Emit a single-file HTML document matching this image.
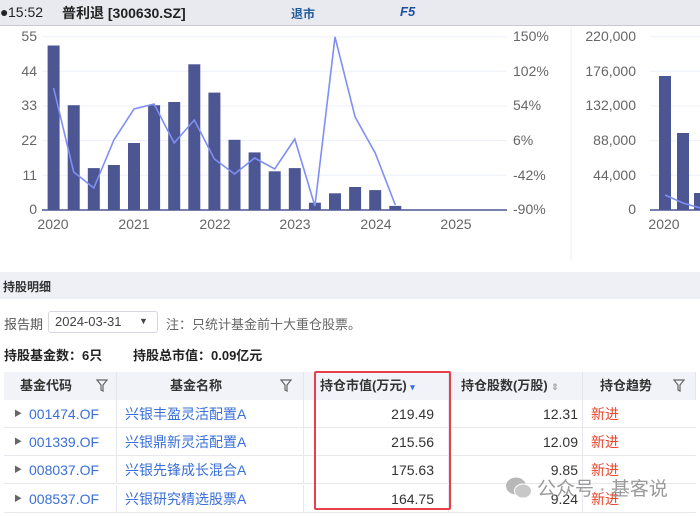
<!DOCTYPE html>
<html><head><meta charset="utf-8"><style>
*{margin:0;padding:0;box-sizing:border-box}
body{width:700px;height:516px;overflow:hidden;background:#fff;font-family:"Liberation Sans","Noto Sans CJK SC",sans-serif;position:relative;color:#333}
.a{position:absolute;white-space:nowrap}
.top{left:0;top:0;width:700px;height:26px;background:#e9eaf0;border-bottom:1px solid #c8c9d0}
.sec{left:0;top:272px;width:700px;height:27px;background:#eef0f6}
.th{position:absolute;top:372px;height:28px;background:#f2f3f8;border-right:1px solid #e3e5ec;font-weight:bold;font-size:13px;color:#333;line-height:28px}
.row{position:absolute;left:4px;width:692px;height:28px;border-bottom:1px solid #e6e8ee;font-size:14px;line-height:28px}
.c{position:absolute;top:0;height:28px;border-right:1px solid #e6e8ee}
.blue{color:#3a6fd8}
.red{color:#e8452c}
.flt{position:absolute;top:7px;width:12px;height:13px}
</style></head><body>
<div class="a top"></div>
<div class="a" style="left:0;top:4px;font-size:14px;color:#222">&#9679;</div>
<div class="a" style="left:8px;top:4px;font-size:14px;color:#222">15:52</div>
<div class="a" style="left:62px;top:3px;font-size:14px;font-weight:bold;color:#222">普利退 [300630.SZ]</div>
<div class="a" style="left:291px;top:5px;font-size:12px;font-weight:bold;color:#1f5a9a">退市</div>
<div class="a" style="left:400px;top:4px;font-size:13px;font-weight:bold;font-style:italic;color:#1f4ea0">F5</div>

<svg class="a" style="left:0;top:27px" width="700" height="240" viewBox="0 27 700 240">
<g stroke="#eef0fa" stroke-width="1">
<line x1="42" x2="507" y1="36.7" y2="36.7"/><line x1="42" x2="507" y1="71.3" y2="71.3"/><line x1="42" x2="507" y1="106" y2="106"/><line x1="42" x2="507" y1="140.6" y2="140.6"/><line x1="42" x2="507" y1="175.3" y2="175.3"/>
<line x1="650" x2="700" y1="36.7" y2="36.7"/><line x1="650" x2="700" y1="71.3" y2="71.3"/><line x1="650" x2="700" y1="106" y2="106"/><line x1="650" x2="700" y1="140.6" y2="140.6"/><line x1="650" x2="700" y1="175.3" y2="175.3"/>
</g>
<line x1="571" x2="571" y1="27" y2="260" stroke="#eceef3"/>
<g fill="#4c5693">
<rect x="47.6" y="45.5" width="12" height="164.5"/><rect x="67.7" y="105.2" width="12" height="104.8"/><rect x="87.8" y="168.1" width="12" height="41.9"/><rect x="107.9" y="165" width="12" height="45"/><rect x="128" y="143" width="12" height="67"/><rect x="148.1" y="105.2" width="12" height="104.8"/><rect x="168.2" y="102" width="12" height="108"/><rect x="188.3" y="64.3" width="12" height="145.7"/><rect x="208.4" y="92.6" width="12" height="117.4"/><rect x="228.5" y="139.8" width="12" height="70.2"/><rect x="248.6" y="152.4" width="12" height="57.6"/><rect x="268.7" y="171.3" width="12" height="38.7"/><rect x="288.8" y="168.1" width="12" height="41.9"/><rect x="308.9" y="202.7" width="12" height="7.3"/><rect x="329" y="193.3" width="12" height="16.7"/><rect x="349.1" y="187" width="12" height="23"/><rect x="369.2" y="190.1" width="12" height="19.9"/><rect x="389.3" y="205.9" width="12" height="4.1"/>
<rect x="659" y="76" width="12" height="134"/><rect x="677" y="133" width="12" height="77"/><rect x="694" y="193" width="12" height="17"/>
</g>
<polyline fill="none" stroke="#7f8ff5" stroke-width="1.6" points="53.6,88 73.7,172 93.8,188 113.9,140 134,109 154.1,104 174.2,143 194.3,120 214.4,159 234.5,174 254.6,158 274.7,169 294.8,139 314.9,206 335,37 355.1,117 375.2,153 395.3,205"/>
<polyline fill="none" stroke="#7f8ff5" stroke-width="1.6" points="665,195 683,203 700,208"/>
<line x1="42" x2="507" y1="210" y2="210" stroke="#4c5693" stroke-width="1.5"/>
<line x1="650" x2="700" y1="210" y2="210" stroke="#4c5693" stroke-width="1.5"/>
<g font-size="14" fill="#666" font-family="Liberation Sans,sans-serif">
<g text-anchor="end"><text x="37" y="41">55</text><text x="37" y="76">44</text><text x="37" y="110">33</text><text x="37" y="145">22</text><text x="37" y="180">11</text><text x="37" y="214">0</text>
<text x="636" y="41">220,000</text><text x="636" y="76">176,000</text><text x="636" y="110">132,000</text><text x="636" y="145">88,000</text><text x="636" y="180">44,000</text><text x="636" y="214">0</text></g>
<text x="513" y="41">150%</text><text x="513" y="76">102%</text><text x="513" y="110">54%</text><text x="513" y="145">6%</text><text x="513" y="180">-42%</text><text x="513" y="214">-90%</text>
<g text-anchor="middle"><text x="53" y="229">2020</text><text x="134" y="229">2021</text><text x="215" y="229">2022</text><text x="295" y="229">2023</text><text x="376" y="229">2024</text><text x="456" y="229">2025</text><text x="664" y="229">2020</text></g>
</g>
</svg>

<div class="a sec"></div>
<div class="a" style="left:3px;top:278px;font-size:12px;font-weight:bold;color:#333">持股明细</div>
<div class="a" style="left:4px;top:314px;font-size:13px;color:#555">报告期</div>
<div class="a" style="left:48px;top:311px;width:110px;height:22px;border:1px solid #d6d8e0;border-radius:3px;font-size:13px;color:#444;padding:2px 0 0 6px">2024-03-31<span style="position:absolute;left:90px;top:4px;font-size:9px">▼</span></div>
<div class="a" style="left:166px;top:314px;font-size:13px;color:#666">注：只统计基金前十大重仓股票。</div>
<div class="a" style="left:4px;top:345px;font-size:13px;font-weight:bold;color:#222">持股基金数：6只</div>
<div class="a" style="left:133px;top:345px;font-size:13px;font-weight:bold;color:#222">持股总市值：0.09亿元</div>

<div class="th" style="left:4px;width:113px;padding-left:16px">基金代码<svg class="flt" style="left:92px" viewBox="0 0 12 13"><path d="M1 1H11L7 6V12L5 11V6Z" fill="none" stroke="#666" stroke-width="1.2"/></svg></div>
<div class="th" style="left:117px;width:187px;padding-left:53px">基金名称<svg class="flt" style="left:163px" viewBox="0 0 12 13"><path d="M1 1H11L7 6V12L5 11V6Z" fill="none" stroke="#666" stroke-width="1.2"/></svg></div>
<div class="th" style="left:304px;width:145px;padding-left:16px">持仓市值(万元) <span style="font-size:9px;color:#3a6fd8">▾</span></div>
<div class="th" style="left:449px;width:134px;padding-left:12px">持仓股数(万股) <span style="font-size:9px;color:#aaa">⇕</span></div>
<div class="th" style="left:583px;width:113px;padding-left:17px">持仓趋势<svg class="flt" style="left:90px" viewBox="0 0 12 13"><path d="M1 1H11L7 6V12L5 11V6Z" fill="none" stroke="#666" stroke-width="1.2"/></svg></div>

<div class="row" style="top:400px"><div class="c" style="left:0;width:113px"><span style="color:#666;font-size:8px;position:absolute;left:10px">▶</span><span class="blue" style="position:absolute;left:25px">001474.OF</span></div><div class="c blue" style="left:113px;width:187px;padding-left:8px">兴银丰盈灵活配置A</div><div class="c" style="left:300px;width:145px;text-align:right;padding-right:14px">219.49</div><div class="c" style="left:445px;width:134px;text-align:right;padding-right:4px">12.31</div><div class="c red" style="left:579px;width:113px;padding-left:8px;border:none">新进</div></div>
<div class="row" style="top:428px"><div class="c" style="left:0;width:113px"><span style="color:#666;font-size:8px;position:absolute;left:10px">▶</span><span class="blue" style="position:absolute;left:25px">001339.OF</span></div><div class="c blue" style="left:113px;width:187px;padding-left:8px">兴银鼎新灵活配置A</div><div class="c" style="left:300px;width:145px;text-align:right;padding-right:14px">215.56</div><div class="c" style="left:445px;width:134px;text-align:right;padding-right:4px">12.09</div><div class="c red" style="left:579px;width:113px;padding-left:8px;border:none">新进</div></div>
<div class="row" style="top:456px"><div class="c" style="left:0;width:113px"><span style="color:#666;font-size:8px;position:absolute;left:10px">▶</span><span class="blue" style="position:absolute;left:25px">008037.OF</span></div><div class="c blue" style="left:113px;width:187px;padding-left:8px">兴银先锋成长混合A</div><div class="c" style="left:300px;width:145px;text-align:right;padding-right:14px">175.63</div><div class="c" style="left:445px;width:134px;text-align:right;padding-right:4px">9.85</div><div class="c red" style="left:579px;width:113px;padding-left:8px;border:none">新进</div></div>
<div class="row" style="top:485px"><div class="c" style="left:0;width:113px"><span style="color:#666;font-size:8px;position:absolute;left:10px">▶</span><span class="blue" style="position:absolute;left:25px">008537.OF</span></div><div class="c blue" style="left:113px;width:187px;padding-left:8px">兴银研究精选股票A</div><div class="c" style="left:300px;width:145px;text-align:right;padding-right:14px">164.75</div><div class="c" style="left:445px;width:134px;text-align:right;padding-right:4px">9.24</div><div class="c red" style="left:579px;width:113px;padding-left:8px;border:none">新进</div></div>

<div class="a" style="left:314px;top:371px;width:137px;height:139px;border:2px solid #e8404a;border-radius:2px"></div>

<svg class="a" style="left:505px;top:476px" width="28" height="24" viewBox="0 0 28 24"><ellipse cx="11" cy="10" rx="10" ry="8.5" fill="#b8b8b8"/><ellipse cx="18" cy="15" rx="8.5" ry="7" fill="#c8c8c8" stroke="#fff" stroke-width="1"/></svg>
<div class="a" style="left:537px;top:474px;font-size:19px;color:#9a9a9a">公众号 · 基客说</div>
</body></html>
